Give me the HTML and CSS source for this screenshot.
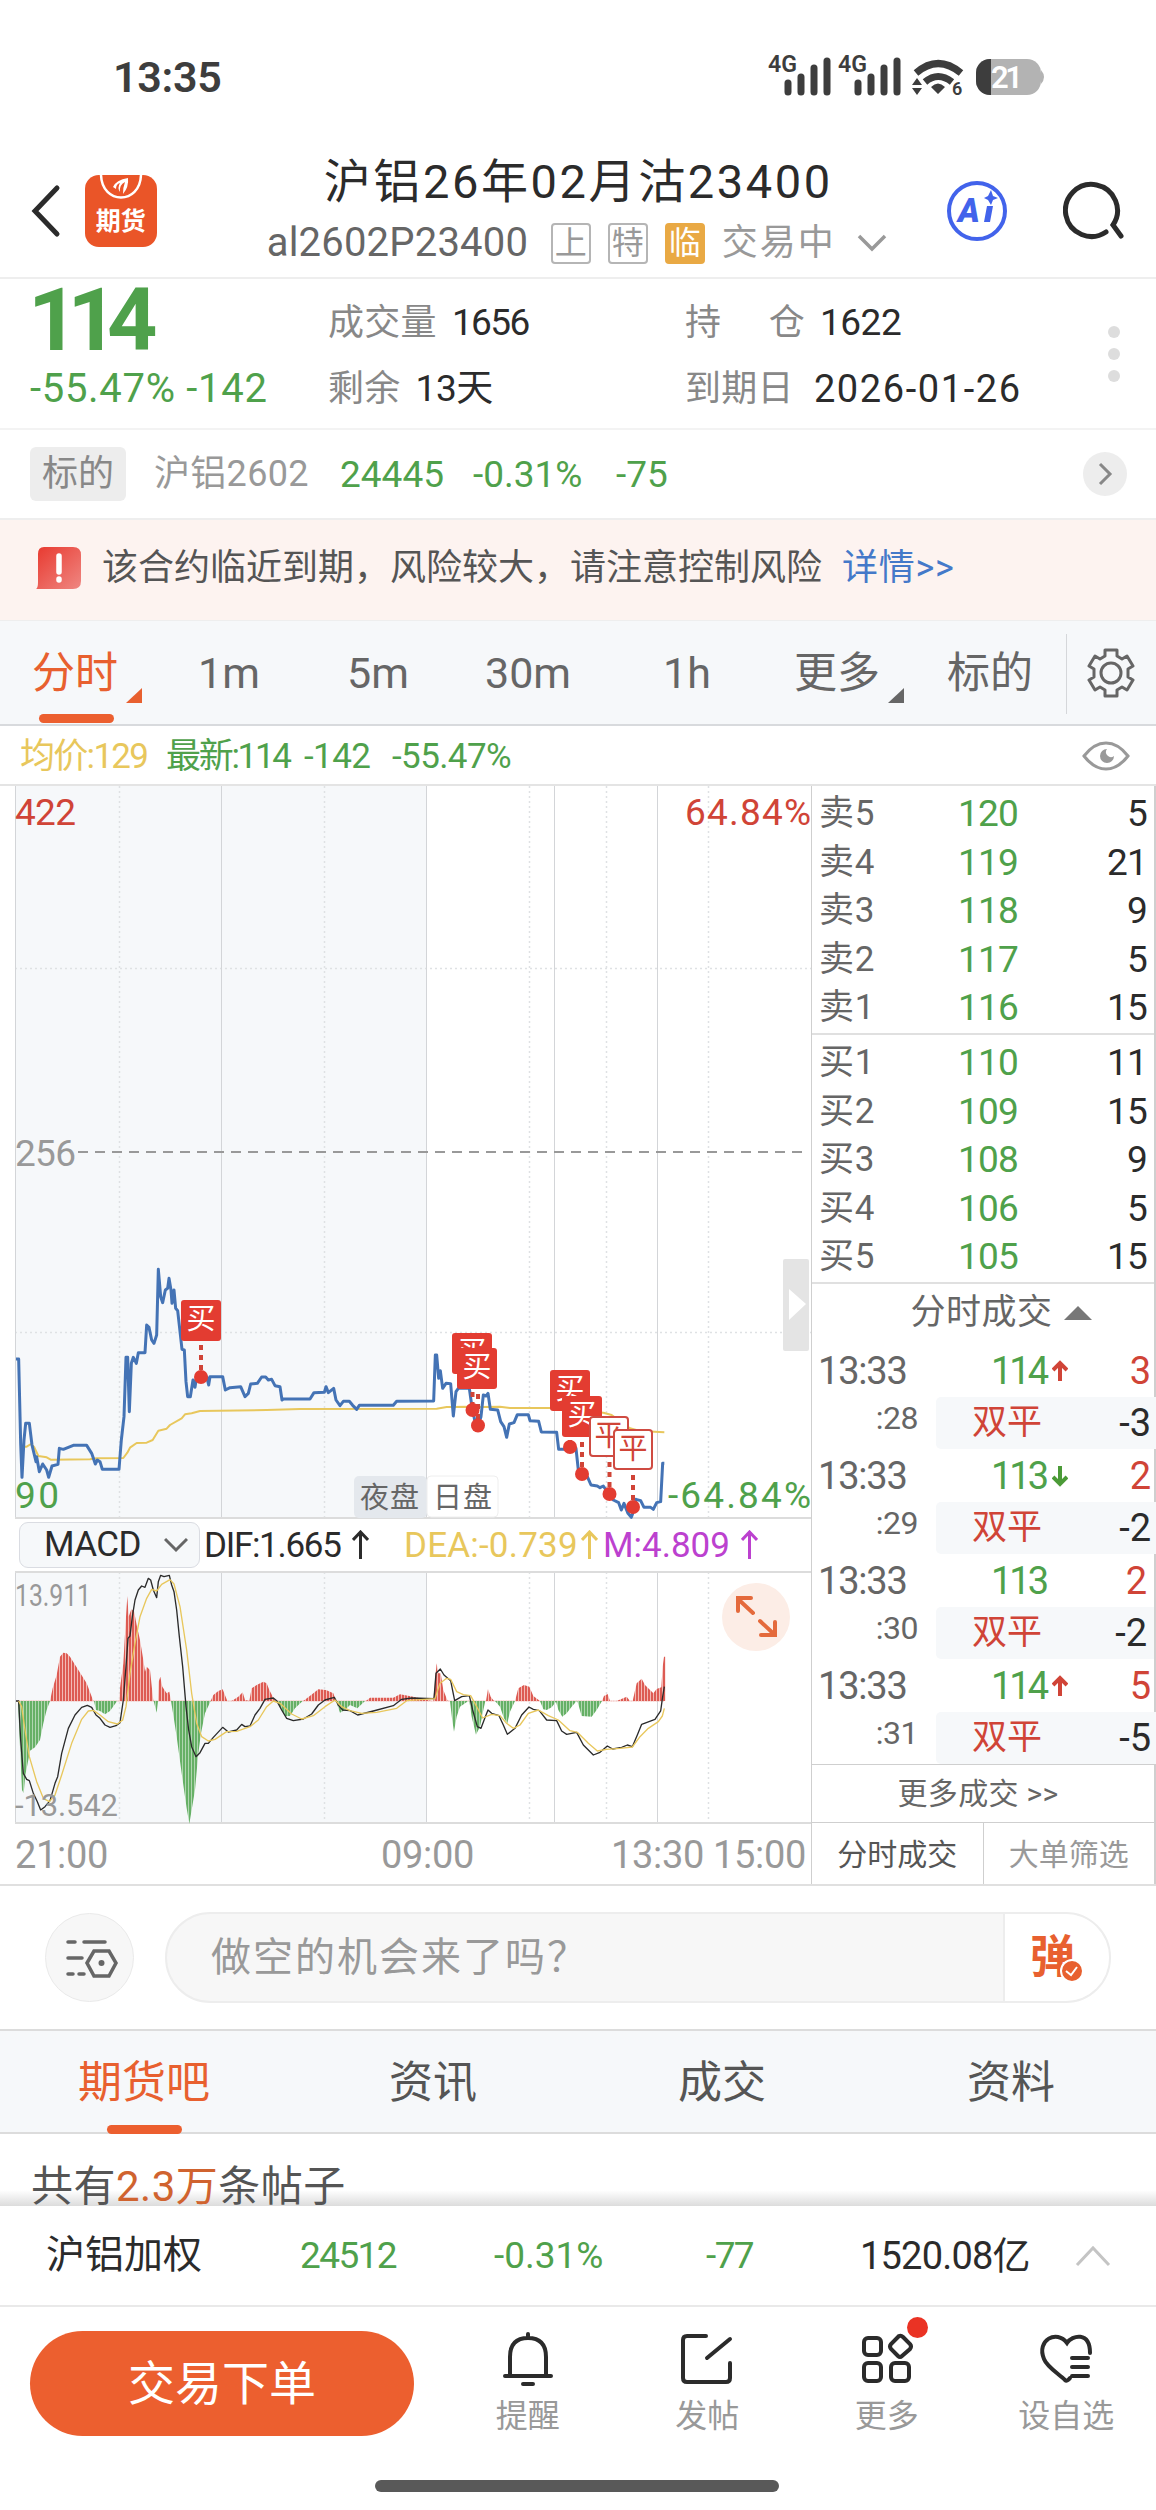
FILE: index.html
```html
<!DOCTYPE html>
<html lang="zh-CN">
<head>
    <meta charset="UTF-8">
    <title>沪铝26年02月沽23400</title>
    <link rel="stylesheet" href="styles.css">
</head>
<body>
<div class="page">
    <div class="status-bar">
        <span class="clock">13:35</span>
        <svg class="status-icons" width="280" height="50" viewBox="765 52 280 50">
            <g class="net">
                <text x="768" y="72" textLength="29" lengthAdjust="spacingAndGlyphs">4G</text>
                <path d="M788 92V83M801 92V77M814 92V68M827 92V61"/>
                <text x="838" y="72" textLength="29" lengthAdjust="spacingAndGlyphs">4G</text>
                <path d="M858 92V83M871 92V77M884 92V68M897 92V61"/>
            </g>
            <path class="wifi" d="M916 73Q938 54 961 73M925 82Q938 71 952 82"/>
            <path class="solid" d="M931 87Q938 80 945 87L938 94ZM912 85L917 78L922 85ZM912 88L917 95L922 88Z"/>
            <text class="six" x="952" y="95">6</text>
            <rect x="976" y="59" width="65" height="36" rx="14" fill="#b3b3b3"/>
            <path d="M990 59H991V95H990A14 14 0 0 1 976 81V73A14 14 0 0 1 990 59Z" fill="#3d3d3d"/>
            <path d="M1041 70Q1047 77 1041 84Z" fill="#b3b3b3"/>
            <text class="battery" x="991" y="88" textLength="32">21</text>
        </svg>
    </div>

    <header class="header">
        <svg class="back" width="34" height="56" viewBox="0 0 34 56"><path d="M28 5L6 28L28 51"/></svg>
        <div class="logo">
            <svg width="72" height="26" viewBox="0 0 72 26">
                <path d="M16 0C17 30 55 30 56 0" fill="none" stroke="#fff" stroke-width="2.5"/>
                <path d="M28 12Q31 5 43 3Q44 12 38 19Q38 12 40 7Q34 10 35 17Q32 13 35 8Q31 9 31 14Z" fill="#fff"/>
            </svg>
            <span>期货</span>
        </div>
        <div class="title-box">
            <h1>沪铝26年02月沽23400</h1>
            <div class="subtitle">
                <span class="code">al2602P23400</span>
                <span class="tag">上</span>
                <span class="tag">特</span>
                <span class="tag tag-warn">临</span>
                <span class="state">交易中</span>
                <svg width="32" height="20" viewBox="0 0 32 20"><path d="M3 3L16 16L29 3"/></svg>
            </div>
        </div>
        <svg class="ai" width="64" height="64" viewBox="0 0 64 64">
            <circle cx="32" cy="32" r="28"/>
            <text x="13" y="43">A</text>
            <path d="M39 43L42 27H48L45 43ZM46 11L48 17L53 19L48 21L46 26L43 21L39 19L43 17Z"/>
        </svg>
        <svg class="search" width="64" height="64" viewBox="0 0 64 64"><path d="M43 53A26 26 0 1 1 50 46L58 57"/></svg>
    </header>

    <section class="quote">
        <div class="price">
            <strong>114</strong>
            <span>-55.47% -142</span>
        </div>
        <div class="stat">
            <div><label>成交量</label><b class="vol">1656</b></div>
            <div><label>剩余</label><b>13天</b></div>
        </div>
        <div class="stat stat-right">
            <div><label class="spread"><i>持</i><i>仓</i></label><b>1622</b></div>
            <div><label>到期日</label><b class="date">2026-01-26</b></div>
        </div>
        <div class="dots"><i></i><i></i><i></i></div>
    </section>

    <section class="underlying">
        <span class="badge">标的</span>
        <span class="name">沪铝2602</span>
        <span class="green">24445</span>
        <span class="green">-0.31%</span>
        <span class="green">-75</span>
        <svg width="44" height="44" viewBox="0 0 44 44"><circle cx="22" cy="22" r="22"/><path d="M17 12L27 22L17 32"/></svg>
    </section>

    <section class="warning">
        <svg width="46" height="44" viewBox="0 0 46 44">
            <defs><linearGradient id="warn" x1="0" y1="0" x2="1" y2="1"><stop offset="0" stop-color="#e8392f"/><stop offset="1" stop-color="#ef8782"/></linearGradient></defs>
            <path d="M8 1H37Q45 1 45 9V35Q45 43 37 43H0Q2 42 2 36V8Q2 1 8 1Z" fill="url(#warn)"/>
            <path d="M23 10V26M23 33V34" stroke="#fff" stroke-width="5.5" stroke-linecap="round"/>
        </svg>
        <span>该合约临近到期，风险较大，请注意控制风险</span>
        <a>详情&gt;&gt;</a>
    </section>

    <nav class="periods">
        <a class="active corner">分时</a>
        <a>1m</a>
        <a>5m</a>
        <a>30m</a>
        <a>1h</a>
        <a class="corner">更多</a>
        <a>标的</a>
        <span class="gear">
            <svg width="48" height="52" viewBox="0 0 48 52">
                <path d="M18 3H30V9L35 12L40 9L46 19L41 22V30L46 33L40 43L35 40L30 43V49H18V43L13 40L8 43L2 33L7 30V22L2 19L8 9L13 12L18 9Z"/>
                <circle cx="24" cy="26" r="10"/>
            </svg>
        </span>
    </nav>

    <div class="info">
        <span class="yellow">均价:129</span>
        <span class="green latest">最新:114</span>
        <span class="green">-142</span>
        <span class="green">-55.47%</span>
        <svg width="48" height="30" viewBox="0 0 48 30">
            <path d="M2 15Q12 2 24 2Q36 2 46 15Q36 28 24 28Q12 28 2 15Z" fill="none" stroke="#999" stroke-width="3"/>
            <path d="M25 8A7 7 0 1 0 32 15A5 5 0 0 1 25 8Z" fill="#999"/>
        </svg>
    </div>

    <main class="market">
        <div class="charts">
            <svg class="chart" width="811" height="733" viewBox="0 786 811 733">
                <rect x="15" y="786" width="412" height="733" fill="#f6f8fa"/>
                <path class="dot-line" d="M15 968.5H811M15 1332.5H811M119.5 786V1518M324.5 786V1518M529.5 786V1518M606.5 786V1518M708.5 786V1518"/>
                <path class="grid-line" d="M15.5 786V1518M221.5 786V1518M426.5 786V1518M554.5 786V1518M657.5 786V1518"/>
                <path d="M15 1518H811" stroke="#dcdcdc" stroke-width="2"/>
                <path d="M78 1152H806" stroke="#999" stroke-width="2" stroke-dasharray="10 7"/>
                <rect x="783" y="1259" width="26" height="92" rx="2" fill="#e4e4e4"/>
                <path d="M789 1289L806 1304L789 1320Z" fill="#fff"/>

                <rect x="354" y="1476" width="73" height="42" rx="5" fill="#e4e8ed"/>
                <rect x="427" y="1476" width="71" height="41" rx="4" fill="#fff" stroke="#eee"/>
                <g class="session">
                    <text x="360" y="1508" textLength="59">夜盘</text>
                    <text x="433" y="1508" textLength="59">日盘</text>
                </g>
                <g class="axis-text">
                    <text x="15" y="825" textLength="61" fill="#d04437">422</text>
                    <text x="685" y="825" textLength="126" fill="#d04437">64.84%</text>
                    <text x="15" y="1166" textLength="61" fill="#999">256</text>
                    <text x="15" y="1508" textLength="44" fill="#4fa14b">90</text>
                    <text x="668" y="1508" textLength="143" fill="#4fa14b">-64.84%</text>
                </g>

                <!-- average and price curves -->
                <g transform="translate(0 1240) scale(.33333)" fill="none" stroke-linejoin="round">
                    <polyline stroke="#e8c75c" stroke-width="6" points="62,620 80,620 93,612 103,622 115,648 140,652 152,659 270,658 290,655 370,654 382,638 390,623 410,609 440,608 458,600 475,572 500,566 510,555 545,535 555,523 575,520 600,513 800,510 900,507 1310,506 1340,501 1410,500 1440,501 1500,500 1530,504 1650,504 1810,518 1835,525 1890,565 1920,573 1993,577"/>
                    <polyline stroke="#4473b5" stroke-width="9" points="48,357 56,357 62,610 66,712 72,600 77,550 88,550 96,615 102,640 108,665 110,650 118,695 128,672 140,690 146,712 156,678 174,673 178,625 190,628 220,616 260,616 275,640 286,672 292,660 300,665 307,688 357,688 364,600 372,530 378,352 383,352 388,515 394,370 400,352 409,370 415,338 435,338 440,255 447,262 455,300 462,310 470,285 475,88 482,170 488,188 496,150 503,145 507,115 513,150 516,190 522,150 527,205 533,212 539,265 546,328 553,330 558,425 563,470 571,470 579,420 585,442 590,410 620,410 626,435 630,410 668,410 676,450 690,443 722,440 735,470 745,460 752,432 772,430 785,411 797,411 805,420 815,418 825,437 840,440 846,480 850,477 930,477 942,458 973,457 978,440 985,458 1001,445 1008,480 1020,497 1030,484 1048,484 1058,496 1070,508 1078,496 1180,496 1190,484 1301,483 1306,345 1310,345 1316,415 1321,392 1328,445 1338,430 1352,431 1360,528 1368,455 1375,445 1408,445 1415,495 1426,550 1434,556 1443,530 1450,465 1458,468 1464,460 1471,508 1493,510 1502,545 1512,560 1520,592 1528,552 1542,548 1552,524 1585,524 1590,542 1616,544 1624,576 1670,577 1676,628 1700,628 1728,625 1735,690 1745,702 1762,710 1773,735 1792,738 1800,743 1810,738 1828,765 1840,780 1856,788 1864,810 1872,790 1884,820 1894,832 1902,810 1908,778 1922,782 1932,802 1952,802 1960,808 1970,788 1982,785 1988,670 1993,670"/>
                </g>

                <!-- trade markers -->
                <g class="marker">
                    <path d="M201 1345V1377M472.5 1372V1410M478 1394V1425M570 1410V1447M582 1442V1474M609.5 1462V1494M633 1475V1507"/>
                    <circle cx="201" cy="1377" r="7"/>
                    <circle cx="472.5" cy="1410" r="7"/>
                    <circle cx="478" cy="1425.5" r="7"/>
                    <circle cx="570" cy="1447" r="7"/>
                    <circle cx="582" cy="1474" r="7"/>
                    <circle cx="609.5" cy="1494" r="7"/>
                    <circle cx="633" cy="1507" r="7"/>
                    <rect x="181" y="1300" width="40" height="41" rx="3"/><text x="201" y="1329">买</text>
                    <rect x="452" y="1333" width="40" height="41" rx="3"/><text x="472" y="1362">买</text>
                    <rect x="457" y="1348" width="40" height="41" rx="3"/><text x="477" y="1377">买</text>
                    <rect x="550" y="1370" width="40" height="41" rx="3"/><text x="570" y="1399">买</text>
                    <rect x="562" y="1396" width="40" height="41" rx="3"/><text x="582" y="1425">买</text>
                    <g class="close">
                        <rect x="590" y="1417" width="38" height="39" rx="3"/><text x="609" y="1446">平</text>
                        <rect x="614" y="1430" width="38" height="39" rx="3"/><text x="633" y="1459">平</text>
                    </g>
                </g>
            </svg>

            <div class="macd-bar">
                <span class="select">MACD <svg width="24" height="16" viewBox="0 0 24 16"><path d="M1 2L12 13L23 2" stroke="#666"/></svg></span>
                <span class="dif">DIF:1.665</span>
                <svg class="arrow" width="17" height="30" viewBox="0 0 17 30"><path d="M8.5 29V2M1 10L8.5 2L16 10" stroke="#2b2b2b"/></svg>
                <span class="dea">DEA:-0.739</span>
                <svg class="arrow" width="17" height="30" viewBox="0 0 17 30"><path d="M8.5 29V2M1 10L8.5 2L16 10" stroke="#e8c75c"/></svg>
                <span class="m">M:4.809</span>
                <svg class="arrow" width="17" height="30" viewBox="0 0 17 30"><path d="M8.5 29V2M1 10L8.5 2L16 10" stroke="#bc41cf"/></svg>
            </div>

            <svg class="chart" width="811" height="253" viewBox="0 1571 811 253">
                <defs>
                    <pattern id="red-bars" width="9" height="10" patternUnits="userSpaceOnUse"><rect width="9" height="10" fill="#f3bab5"/><rect width="6" height="10" fill="#dd5b53"/></pattern>
                    <pattern id="green-bars" width="9" height="10" patternUnits="userSpaceOnUse"><rect width="9" height="10" fill="#b0d6b0"/><rect width="6" height="10" fill="#66b066"/></pattern>
                </defs>
                <rect x="15" y="1571" width="412" height="252" fill="#f6f8fa"/>
                <path class="dot-line" d="M119.5 1572V1823M324.5 1572V1823M529.5 1572V1823M606.5 1572V1823M708.5 1572V1823"/>
                <path class="grid-line" d="M15.5 1572V1823M221.5 1572V1823M426.5 1572V1823M554.5 1572V1823M657.5 1572V1823"/>
                <path d="M15 1572H811M15 1823H811" stroke="#dcdcdc" stroke-width="2"/>
                <g transform="translate(0 1510) scale(.33333)">
                    <path d="M48 573H1993" stroke="#f0b4b0" stroke-width="3" stroke-dasharray="4 1"/>
                    <path fill="url(#red-bars)" d="M150 573L158 535L170 495L180 440L190 428L200 430L210 440L235 480L260 520L280 573ZM358 573L360 535L370 460L378 320L382 258L386 320L394 298L402 303L410 345L420 390L430 450L435 485L440 470L450 480L460 573ZM474 573L476 515L481 500L487 530L500 550L508 545L513 573ZM632 573L640 555L655 543L668 538L682 573ZM695 573L715 560L728 547L735 570L748 573L755 535L770 525L790 515L800 520L808 540L825 573ZM910 573L940 550L955 538L978 540L1000 550L1008 573ZM1098 573L1110 563L1180 563L1200 553L1240 560L1295 573ZM1300 573L1305 510L1310 460L1315 490L1322 490L1330 540L1343 573ZM1458 573L1464 537L1472 560L1482 573ZM1545 573L1555 535L1572 525L1588 530L1600 558L1620 573ZM1806 573L1812 558L1823 552L1830 573ZM1850 573L1880 560L1890 573ZM1898 573L1910 520L1925 506L1935 525L1960 550L1970 537L1984 532L1988 470L1992 440H1996V573Z"/>
                    <path fill="url(#green-bars)" d="M54 573L60 710L66 840L71 850L76 795L82 765L90 722L105 712L120 690L130 640L140 600L150 573ZM282 573L288 600L300 603L315 613L330 603L345 582L352 573ZM461 573L470 608L474 573ZM513 573L520 615L530 680L545 790L560 895L568 941L575 900L585 840L595 730L603 670L615 610L632 573ZM830 573L845 600L855 618L870 618L885 595L908 573ZM1008 573L1020 608L1035 600L1050 585L1072 595L1095 573ZM1350 573L1356 625L1362 665L1370 620L1380 590L1405 573ZM1408 573L1415 620L1428 674L1440 650L1450 600L1456 573ZM1485 573L1500 590L1512 625L1522 640L1530 605L1545 573ZM1620 573L1630 598L1640 600L1655 592L1668 575L1675 600L1687 620L1700 610L1715 590L1730 573ZM1732 573L1745 618L1775 620L1790 600L1806 573Z"/>
                    <g fill="none" stroke-width="4" stroke-linejoin="round">
                        <polyline stroke="#2b2b2b" points="48,573 56,573 62,690 70,790 80,808 88,812 100,850 112,875 122,900 135,890 150,872 165,820 173,800 185,730 205,655 225,615 245,592 262,586 275,592 288,615 300,625 315,645 330,652 348,647 360,638 370,570 378,470 384,385 390,378 397,320 405,270 415,240 425,228 435,232 445,205 452,210 460,240 470,263 475,215 482,196 492,200 508,196 515,225 522,245 530,300 538,380 548,470 558,590 566,660 575,710 588,740 600,728 615,700 625,700 640,682 668,652 685,666 710,660 725,643 735,650 750,648 765,615 780,595 795,568 820,564 830,572 845,600 860,625 880,632 910,627 935,612 955,585 975,570 1003,562 1015,585 1028,600 1050,602 1073,615 1120,603 1180,587 1205,568 1235,564 1302,566 1308,490 1321,477 1332,495 1352,512 1364,572 1385,560 1408,557 1418,600 1432,650 1443,655 1456,620 1464,600 1475,610 1497,617 1510,645 1522,673 1545,655 1565,615 1587,591 1600,598 1618,602 1640,630 1670,632 1685,663 1700,673 1730,667 1750,705 1780,735 1800,727 1822,708 1838,717 1865,712 1882,705 1897,710 1912,675 1925,643 1965,628 1982,603 1988,560 1993,530"/>
                        <polyline stroke="#e8c75c" points="56,573 65,590 75,660 88,740 110,815 130,865 148,875 165,855 185,795 215,700 245,628 265,603 280,601 300,615 325,635 352,642 368,630 378,590 390,490 405,400 420,320 440,265 455,238 470,243 485,223 510,209 522,222 540,290 560,420 575,550 590,640 605,680 625,693 645,688 680,665 710,664 750,650 775,630 800,590 820,573 840,580 875,612 905,627 940,617 975,590 1005,570 1025,590 1050,602 1085,610 1130,607 1190,595 1220,572 1305,566 1320,520 1340,505 1352,508 1370,545 1390,554 1412,557 1430,590 1448,624 1475,613 1500,617 1520,640 1540,655 1560,645 1585,610 1615,600 1645,617 1675,630 1710,662 1732,667 1765,700 1792,723 1820,718 1860,715 1897,711 1920,680 1945,655 1975,635 1987,618 1993,595"/>
                    </g>
                </g>
                <g class="axis-small">
                    <text x="15" y="1606" textLength="76" lengthAdjust="spacingAndGlyphs">13.911</text>
                    <text x="15" y="1816" textLength="103">-13.542</text>
                </g>
                <circle cx="756" cy="1617" r="34" fill="#fcede6"/>
                <path d="M753 1613L738 1599M738 1611V1598H751M760 1621L775 1635M775 1622V1635H761" fill="none" stroke="#e46a3c" stroke-width="4" stroke-linecap="round"/>
            </svg>
            <div class="times"><span>21:00</span><span>09:00</span><span>13:30</span><span>15:00</span></div>
        </div>

        <aside class="book">
            <div class="levels">
                <div><span>卖5</span><span>120</span><span>5</span></div>
                <div><span>卖4</span><span>119</span><span>21</span></div>
                <div><span>卖3</span><span>118</span><span>9</span></div>
                <div><span>卖2</span><span>117</span><span>5</span></div>
                <div><span>卖1</span><span>116</span><span>15</span></div>
            </div>
            <div class="levels">
                <div><span>买1</span><span>110</span><span>11</span></div>
                <div><span>买2</span><span>109</span><span>15</span></div>
                <div><span>买3</span><span>108</span><span>9</span></div>
                <div><span>买4</span><span>106</span><span>5</span></div>
                <div><span>买5</span><span>105</span><span>15</span></div>
            </div>
            <div class="trade-head">分时成交 <i></i></div>
            <div class="trade">
                <span class="time">13:33</span>
                <span class="deal">114<svg width="16" height="22" viewBox="0 0 16 22"><path d="M8 21V3M1 10L8 3L15 10" stroke="#d04437"/></svg></span>
                <span class="num">3</span>
                <span class="sec">:28</span>
                <div class="kind"><span>双平</span><span>-3</span></div>
            </div>
            <div class="trade">
                <span class="time">13:33</span>
                <span class="deal">113<svg width="16" height="22" viewBox="0 0 16 22"><path d="M8 1V19M1 12L8 19L15 12" stroke="#4b9a37"/></svg></span>
                <span class="num">2</span>
                <span class="sec">:29</span>
                <div class="kind"><span>双平</span><span>-2</span></div>
            </div>
            <div class="trade">
                <span class="time">13:33</span>
                <span class="deal">113</span>
                <span class="num">2</span>
                <span class="sec">:30</span>
                <div class="kind"><span>双平</span><span>-2</span></div>
            </div>
            <div class="trade">
                <span class="time">13:33</span>
                <span class="deal">114<svg width="16" height="22" viewBox="0 0 16 22"><path d="M8 21V3M1 10L8 3L15 10" stroke="#d04437"/></svg></span>
                <span class="num">5</span>
                <span class="sec">:31</span>
                <div class="kind"><span>双平</span><span>-5</span></div>
            </div>
            <div class="more-trades">更多成交 &gt;&gt;</div>
            <div class="book-tabs"><span class="on">分时成交</span><span>大单筛选</span></div>
        </aside>
    </main>

    <section class="comment">
        <span class="round">
            <svg width="54" height="44" viewBox="0 0 54 44">
                <path d="M3 6H10M19 6H40M3 22H17M3 38H8M14 38H19M22 27L29 15H44L51 27L44 40H29Z"/>
                <circle cx="36.5" cy="27" r="3" fill="#666" stroke="none"/>
            </svg>
        </span>
        <div class="input">
            <span>做空的机会来了吗？</span>
            <b>弹<svg width="24" height="24" viewBox="0 0 24 24"><circle cx="12" cy="12" r="11" fill="#e8602f" stroke="#fff" stroke-width="2"/><path d="M6 12L11 16L17 8" fill="none" stroke="#fff" stroke-width="2"/></svg></b>
        </div>
    </section>

    <nav class="tabs">
        <a class="active">期货吧</a>
        <a>资讯</a>
        <a>成交</a>
        <a>资料</a>
    </nav>

    <section class="posts">共有<em>2.3万</em>条帖子</section>

    <section class="index">
        <span class="name">沪铝加权</span>
        <span class="green">24512</span>
        <span class="green change">-0.31%</span>
        <span class="green">-77</span>
        <span class="amount">1520.08亿</span>
        <svg width="36" height="22" viewBox="0 0 36 22"><path d="M2 20L18 3L34 20"/></svg>
    </section>

    <footer class="toolbar">
        <a class="order">交易下单</a>
        <a class="tool">
            <svg width="56" height="56" viewBox="0 0 56 56"><path d="M28 3V7M10 44V26Q10 7 28 7Q46 7 46 26V44M5 45H51M23 53H33"/></svg>
            <span>提醒</span>
        </a>
        <a class="tool">
            <svg width="56" height="56" viewBox="0 0 56 56"><path d="M27 5H8Q4 5 4 9V47Q4 51 8 51H47Q51 51 51 47V32M51 8L28 27"/></svg>
            <span>发帖</span>
        </a>
        <a class="tool">
            <svg width="56" height="56" viewBox="0 0 56 56">
                <rect x="5" y="7" width="17" height="17" rx="4"/>
                <rect x="5" y="32" width="17" height="18" rx="4"/>
                <rect x="32" y="32" width="18" height="18" rx="4"/>
                <path d="M40 5Q42 4 44 6L51 13Q53 15.5 51 18L43 25Q41 27 39 25L32 18Q30 15.5 32 13Z"/>
            </svg>
            <i class="red-dot"></i>
            <span>更多</span>
        </a>
        <a class="tool">
            <svg width="56" height="56" viewBox="0 0 56 56"><path d="M52 22C52 0 34 4 29 12C19 -2 -2 9 6 28C9 36 21 43 27 49Q29 51 32 47M34 27H50M34 36H50M34 45H50"/></svg>
            <span>设自选</span>
        </a>
    </footer>
    <div class="home-bar"></div>
</div>
</body>
</html>
```
FILE: styles.css
```css
* {
    box-sizing: border-box;
}
body {
    margin: 0;
    background: #fff;
    color: #2b2b2b;
    font-family: Roboto, "Noto Sans CJK SC", sans-serif;
    font-size: 36px;
    line-height: 1;
}
.page {
    width: 1156px;
    height: 2510px;
    overflow: hidden;
}
svg {
    display: block;
    flex: none;
}
span, a, b, strong, label {
    white-space: nowrap;
}
i, em {
    font-style: normal;
}
.green {
    color: #4fa14b;
}
.yellow {
    color: #e8c75c;
}

/* status bar */
.status-bar {
    display: flex;
    justify-content: space-between;
    height: 142px;
    padding: 52px 111px 0 113px;
    color: #3d3d3d;
}
.clock {
    font-size: 43px;
    font-weight: 600;
    line-height: 50px;
    letter-spacing: -0.3px;
}
.status-icons {
    overflow: visible;
}
.status-icons text {
    fill: #3d3d3d;
    font-size: 24px;
    font-weight: 600;
}
.net path {
    stroke: #3d3d3d;
    stroke-width: 7;
    stroke-linecap: round;
}
.wifi {
    fill: none;
    stroke: #3d3d3d;
    stroke-width: 7;
}
.solid {
    fill: #3d3d3d;
}
.status-icons .six {
    font-size: 18px;
}
.status-icons .battery {
    fill: #fff;
    font-size: 31px;
}

/* header */
.header {
    display: flex;
    height: 137px;
    padding: 0 29px;
    border-bottom: 2px solid #eee;
}
.back {
    margin-top: 41px;
    fill: none;
    stroke: #2b2b2b;
    stroke-width: 5;
    stroke-linecap: round;
}
.logo {
    width: 72px;
    height: 72px;
    margin: 33px 0 0 22px;
    border-radius: 14px;
    background: #ea5528;
    overflow: hidden;
}
.logo span {
    display: block;
    margin-top: 8px;
    color: #fff;
    font-size: 25px;
    font-weight: 700;
    line-height: 26px;
    text-align: center;
}
.title-box {
    width: 630px;
    margin-left: 110px;
}
h1 {
    margin: 13px 0 0 57px;
    font-size: 47px;
    font-weight: 400;
    line-height: 54px;
    letter-spacing: 2.6px;
    white-space: nowrap;
}
.subtitle {
    display: flex;
    align-items: center;
    height: 42px;
    margin-top: 13px;
    color: #999;
}
.subtitle .code {
    width: 284px;
    color: #666;
    font-size: 40px;
    letter-spacing: 0.2px;
}
.tag {
    width: 40px;
    height: 41px;
    margin-right: 17px;
    border: 2px solid #b5b5b5;
    border-radius: 4px;
    font-size: 32px;
    line-height: 37px;
    text-align: center;
}
.tag-warn {
    border-color: #e9a944;
    background: #e9a944;
    color: #fff;
}
.state {
    width: 134px;
    font-size: 36px;
    letter-spacing: 2px;
}
.subtitle svg {
    fill: none;
    stroke: #999;
    stroke-width: 3.5;
}
.ai {
    margin: 37px 0 0 51px;
    stroke: none;
    fill: #4263eb;
}
.ai circle {
    fill: none;
    stroke: #4263eb;
    stroke-width: 4;
}
.ai text {
    font-size: 33px;
    font-weight: 900;
    font-style: italic;
}
.search {
    margin: 37px 0 0 54px;
    fill: none;
    stroke: #2b2b2b;
    stroke-width: 5;
    stroke-linecap: round;
}

/* quote */
.quote {
    display: flex;
    height: 151px;
    padding: 5px 0 0 30px;
    border-bottom: 2px solid #f3f3f3;
}
.price {
    width: 298px;
    color: #4fa14b;
}
.price strong {
    display: block;
    margin-left: -2px;
    font-size: 88px;
    font-weight: 700;
    line-height: 72px;
    letter-spacing: -11px;
}
.price span {
    display: block;
    margin-top: 12px;
    font-size: 40px;
    line-height: 42px;
    letter-spacing: 0.7px;
}
.stat {
    width: 357px;
    padding-top: 12px;
}
.stat div {
    display: flex;
    height: 66px;
    line-height: 54px;
}
.stat label {
    margin-right: 15px;
    color: #888;
    letter-spacing: 0.3px;
}
.stat b {
    font-size: 37px;
    font-weight: 400;
    letter-spacing: -0.5px;
}
.stat .vol {
    letter-spacing: -1.6px;
}
.spread {
    display: flex;
    justify-content: space-between;
    width: 120px;
}
.stat-right {
    width: 360px;
}
.stat .date {
    font-size: 38px;
    letter-spacing: 1.6px;
    margin-left: 5px;
}
.dots {
    margin: 42px 0 0 63px;
}
.dots i {
    display: block;
    width: 12px;
    height: 12px;
    margin-bottom: 10px;
    border-radius: 50%;
    background: #ddd;
}

/* underlying */
.underlying {
    display: grid;
    grid-template-columns: 124px 186px 133px 143px 467px 44px;
    align-items: center;
    height: 90px;
    padding-left: 30px;
    border-bottom: 2px solid #eee;
}
.underlying .badge {
    width: 96px;
    height: 54px;
    border-radius: 6px;
    background: #ededed;
    color: #888;
    line-height: 54px;
    text-align: center;
}
.underlying .name {
    color: #999;
    letter-spacing: 0.3px;
}
.underlying .green {
    font-size: 37px;
}
.underlying circle {
    fill: #ededed;
}
.underlying path {
    fill: none;
    stroke: #888;
    stroke-width: 3;
}

/* warning */
.warning {
    display: flex;
    align-items: center;
    height: 100px;
    padding: 0 0 5px 36px;
    background: #fdf3f0;
    color: #555;
}
.warning span {
    width: 740px;
    margin-left: 20px;
}
.warning a {
    color: #4479c9;
    letter-spacing: 0.7px;
}

/* periods */
.periods {
    display: grid;
    grid-template-columns: 166px 149px 138px 178px 131px 153px 119px 90px;
    height: 106px;
    padding-left: 32px;
    border-top: 1px solid #eee;
    border-bottom: 2px solid #d8dadd;
    background: #f6f8fa;
    color: #666;
    font-size: 43px;
    line-height: 105px;
}
.periods a {
    position: relative;
}
.periods .active {
    color: #e8602f;
}
.periods .active::before {
    content: "";
    position: absolute;
    left: 7px;
    bottom: 3px;
    width: 75px;
    height: 9px;
    border-radius: 5px;
    background: #ec5f2f;
}
.corner::after {
    content: "";
    position: absolute;
    left: 94px;
    top: 67px;
    border-left: 16px solid transparent;
    border-bottom: 15px solid currentColor;
}
.gear {
    align-self: center;
    height: 80px;
    padding: 13px 0 0 20px;
    border-left: 1px solid #d5d7da;
}
.gear svg {
    fill: none;
    stroke: #666;
    stroke-width: 3;
    stroke-linejoin: round;
}

/* info */
.info {
    display: grid;
    grid-template-columns: 146px 138px 88px 690px 48px;
    align-items: center;
    height: 60px;
    padding: 2px 0 0 20px;
    border-bottom: 2px solid #e4e4e4;
    font-size: 35px;
    letter-spacing: -0.6px;
}
.info .yellow {
    letter-spacing: -1.7px;
}
.info .latest {
    letter-spacing: -2.3px;
}

/* chart column */
.market {
    display: flex;
    height: 1100px;
    border-bottom: 2px solid #e0e0e0;
}
.charts {
    width: 811px;
}
.dot-line {
    stroke: #dfe1e4;
    stroke-width: 1.5;
    stroke-dasharray: 2 3;
}
.grid-line {
    stroke: #d3d5d8;
}
.session text {
    fill: #666;
    font-size: 29px;
}
.axis-text text {
    font-size: 37px;
}
.axis-small text {
    fill: #999;
    font-size: 31px;
}
.marker path {
    stroke: #d04437;
    stroke-width: 4;
    stroke-dasharray: 5 5;
}
.marker circle,
.marker rect {
    fill: #e33c31;
}
.marker text {
    fill: #fff;
    font-size: 29px;
    text-anchor: middle;
}
.marker .close rect {
    fill: #fff;
    stroke: #cf4b42;
    stroke-width: 2;
}
.marker .close text {
    fill: #d04437;
}
.macd-bar {
    display: flex;
    align-items: center;
    height: 52px;
    padding-left: 19px;
    font-size: 35px;
}
.macd-bar path {
    fill: none;
    stroke-width: 3;
}
.select {
    display: flex;
    align-items: center;
    justify-content: space-between;
    width: 181px;
    height: 46px;
    margin-top: -1px;
    padding: 0 11px 0 24px;
    border: 1px solid #dadce2;
    border-radius: 9px;
    background: #f6f8fa;
    letter-spacing: -0.6px;
}
.dif {
    width: 148px;
    margin-left: 4px;
    letter-spacing: -1.3px;
}
.dea {
    width: 177px;
    margin-left: 35px;
    color: #e8c75c;
    letter-spacing: 0.2px;
}
.m {
    width: 138px;
    margin-left: 5px;
    color: #bc41cf;
    letter-spacing: 0;
}
.times {
    display: grid;
    grid-template-columns: 366px 230px 102px 98px;
    padding-left: 15px;
    color: #999;
    font-size: 38px;
    line-height: 62px;
    letter-spacing: -0.3px;
}

/* order book */
.book {
    width: 345px;
    border: solid #cfcfcf;
    border-width: 0 2px 0 1px;
}
.levels {
    height: 249px;
    padding: 3px 7px 0;
    border-bottom: 2px solid #e0e0e0;
}
.levels div {
    display: grid;
    grid-template-columns: 90px 109px 1fr;
    height: 48.6px;
    line-height: 50px;
}
.levels span {
    font-size: 37px;
    text-align: right;
    letter-spacing: -0.8px;
}
.levels span:first-child {
    color: #666;
    font-size: 35px;
    text-align: left;
    letter-spacing: 0.8px;
}
.levels span:nth-child(2) {
    color: #4fa14b;
}
.trade-head {
    display: flex;
    align-items: center;
    justify-content: center;
    height: 60px;
    padding: 0 0 3px 36px;
    color: #666;
    font-size: 35px;
    letter-spacing: 0.5px;
    gap: 11px;
}
.trade-head i {
    border: solid transparent;
    border-width: 0 14px 14px;
    border-bottom-color: #777;
}
.trade {
    display: grid;
    grid-template-columns: 124px 1fr 90px;
    grid-template-rows: 53px 52px;
    height: 105px;
}
.trade .time {
    padding-left: 6px;
    color: #666;
    font-size: 38px;
    line-height: 54px;
    letter-spacing: -1.2px;
}
.trade .deal {
    display: flex;
    align-items: center;
    padding-left: 55px;
    color: #4fa14b;
    font-size: 38px;
    letter-spacing: -3px;
}
.trade .deal svg {
    margin-left: 6px;
}
.trade .deal path {
    fill: none;
    stroke-width: 4;
}
.trade .num {
    padding-right: 7px;
    color: #d04437;
    font-size: 38px;
    line-height: 54px;
    text-align: right;
}
.trade .sec {
    padding-right: 18px;
    color: #666;
    font-size: 32px;
    line-height: 43px;
    letter-spacing: -0.5px;
    text-align: right;
}
.kind {
    grid-column: 2 / 4;
    display: flex;
    justify-content: space-between;
    padding: 0 7px 0 36px;
    border-radius: 5px 0 0 5px;
    background: #f6f8fa;
    line-height: 52px;
}
.kind span:first-child {
    color: #d04437;
    font-size: 35px;
}
.kind span:last-child {
    font-size: 38px;
}
.more-trades {
    height: 59px;
    padding-right: 10px;
    border-top: 1px solid #cfcfcf;
    border-bottom: 1px solid #cfcfcf;
    color: #666;
    font-size: 30px;
    line-height: 58px;
    letter-spacing: 0.3px;
    text-align: center;
}
.book-tabs {
    display: flex;
    height: 61px;
    color: #999;
    font-size: 30px;
    line-height: 64px;
    text-align: center;
}
.book-tabs span {
    flex: 1;
}
.book-tabs .on {
    border-right: 1px solid #cfcfcf;
    color: #555;
}

/* comment */
.comment {
    display: flex;
    align-items: center;
    height: 143px;
    padding-left: 45px;
}
.round {
    display: flex;
    align-items: center;
    justify-content: center;
    width: 89px;
    height: 89px;
    border: 1px solid #eaeaea;
    border-radius: 50%;
    background: #f7f7f7;
}
.round svg {
    margin-left: 4px;
    fill: none;
    stroke: #666;
    stroke-width: 3.5;
    stroke-linecap: round;
}
.input {
    display: flex;
    justify-content: space-between;
    width: 946px;
    height: 91px;
    margin-left: 31px;
    border: 2px solid #ededed;
    border-radius: 46px;
    background: #f7f7f7;
    overflow: hidden;
    line-height: 88px;
}
.input span {
    padding-left: 44px;
    color: #999;
    font-size: 40px;
    letter-spacing: 2px;
}
.input b {
    position: relative;
    width: 106px;
    padding-left: 25px;
    border-left: 2px solid #ededed;
    background: #fff;
    color: #e8602f;
    font-size: 45px;
}
.input b svg {
    position: absolute;
    left: 55px;
    top: 45px;
}

/* tabs */
.tabs {
    display: grid;
    grid-template-columns: repeat(4, 1fr);
    height: 105px;
    border-top: 2px solid #dcdcdc;
    border-bottom: 2px solid #dcdcdc;
    background: #f6f8fa;
    color: #555;
    font-size: 44px;
    line-height: 105px;
    text-align: center;
}
.tabs a {
    padding-right: 1px;
}
.tabs .active {
    position: relative;
    color: #e8602f;
}
.tabs .active::after {
    content: "";
    position: absolute;
    left: 107px;
    bottom: 2px;
    width: 75px;
    height: 9px;
    border-radius: 5px;
    background: #ec5f2f;
}
.posts {
    height: 72px;
    padding-left: 31px;
    background: linear-gradient(#fff 78%, #dcdcdc);
    color: #555;
    font-size: 42px;
    line-height: 105px;
    letter-spacing: 0.5px;
    overflow: hidden;
}
.posts em {
    color: #d0632f;
}

/* bottom */
.index {
    display: grid;
    grid-template-columns: 254px 194px 212px 154px 215px 36px;
    align-items: center;
    height: 101px;
    padding-left: 46px;
    border-bottom: 2px solid #e9e9e9;
    background: #fff;
}
.index .name {
    font-size: 39px;
}
.index .green {
    font-size: 37px;
    letter-spacing: -1.6px;
}
.index .change {
    letter-spacing: 0;
}
.index .amount {
    font-size: 38px;
    letter-spacing: -0.8px;
}
.index path {
    fill: none;
    stroke: #c4c4c4;
    stroke-width: 3;
}
.toolbar {
    display: flex;
    height: 173px;
    padding: 24px 0 0 30px;
}
.order {
    width: 384px;
    height: 105px;
    border-radius: 53px;
    background: #ec5f2f;
    color: #fff;
    font-size: 47px;
    line-height: 105px;
    text-align: center;
}
.tool {
    position: relative;
    display: flex;
    flex-direction: column;
    align-items: center;
    width: 179.5px;
}
.order + .tool {
    margin-left: 24px;
}
.tool svg {
    fill: none;
    stroke: #2b2b2b;
    stroke-width: 4;
    stroke-linecap: round;
}
.tool span {
    margin-top: 11px;
    color: #999;
    font-size: 32px;
    line-height: 36px;
}
.red-dot {
    position: absolute;
    left: 110px;
    top: -14px;
    width: 21px;
    height: 21px;
    border-radius: 50%;
    background: #ea3324;
}
.home-bar {
    width: 404px;
    height: 12px;
    margin-left: 375px;
    border-radius: 6px;
    background: #595959;
}
```
